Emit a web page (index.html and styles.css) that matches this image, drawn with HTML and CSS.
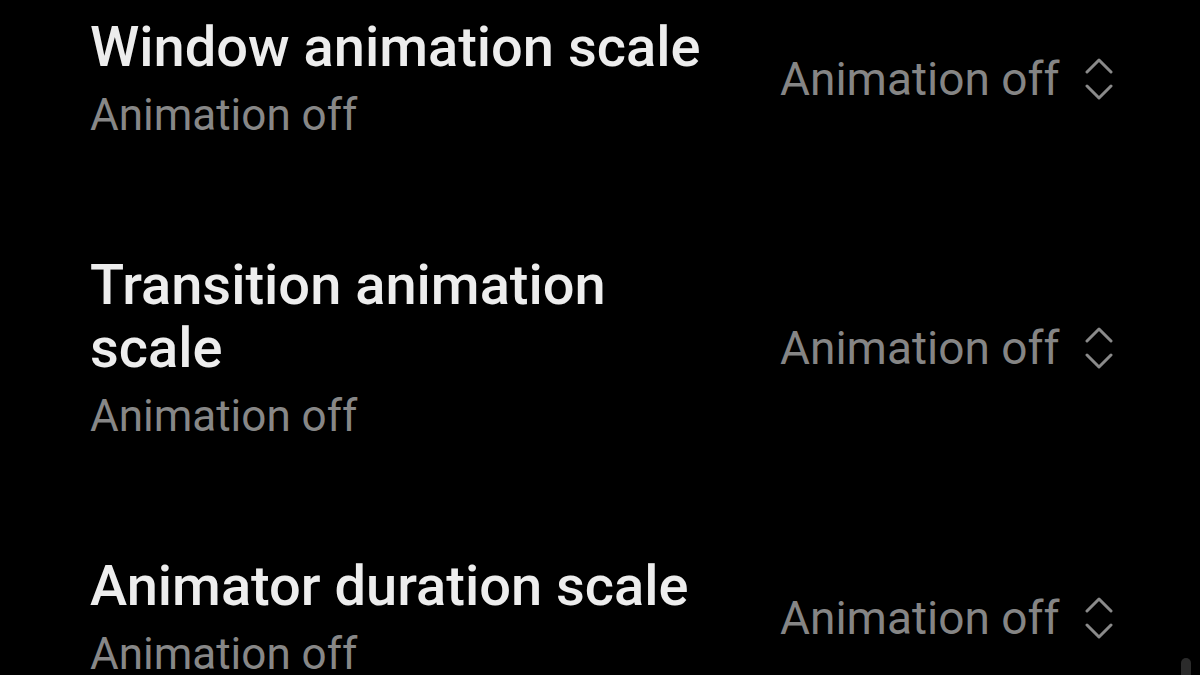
FILE: index.html
```html
<!DOCTYPE html>
<html>
<head>
    <meta charset="utf-8">
    <link rel="stylesheet" href="styles.css">
</head>
<body>
    <div class="settings">
        <div class="row">
            <div class="label">
                <div class="title">Window animation scale</div>
                <div class="summary">Animation off</div>
            </div>
            <div class="value">
                <span>Animation off</span>
                <svg class="spinner" width="28" height="44" viewBox="0 0 28 44">
                    <polyline points="2,15 14,3 26,15"/>
                    <polyline points="2,29 14,41 26,29"/>
                </svg>
            </div>
        </div>
        <div class="row">
            <div class="label">
                <div class="title">Transition animation scale</div>
                <div class="summary">Animation off</div>
            </div>
            <div class="value">
                <span>Animation off</span>
                <svg class="spinner" width="28" height="44" viewBox="0 0 28 44">
                    <polyline points="2,15 14,3 26,15"/>
                    <polyline points="2,29 14,41 26,29"/>
                </svg>
            </div>
        </div>
        <div class="row">
            <div class="label">
                <div class="title">Animator duration scale</div>
                <div class="summary">Animation off</div>
            </div>
            <div class="value">
                <span>Animation off</span>
                <svg class="spinner" width="28" height="44" viewBox="0 0 28 44">
                    <polyline points="2,15 14,3 26,15"/>
                    <polyline points="2,29 14,41 26,29"/>
                </svg>
            </div>
        </div>
    </div>
    <div class="scrollthumb"></div>
</body>
</html>
```

FILE: styles.css
```css
html, body {
    margin: 0;
    height: 100%;
    background-color: #000000;
    overflow: hidden;
    font-family: Roboto, "Noto Sans", sans-serif;
}

.settings {
    display: flex;
    flex-direction: column;
    gap: 113px;
    padding-top: 16px;
    padding-left: 90px;
}

.row {
    display: grid;
    grid-template-columns: 630px auto;
    column-gap: 60px;
    align-items: center;
}

.title {
    font-size: 56px;
    line-height: 63px;
    font-weight: 500;
    color: #ededed;
}

.summary {
    margin-top: 10px;
    font-size: 44px;
    line-height: 52px;
    color: #878787;
}

.value {
    display: flex;
    align-items: center;
    gap: 26px;
    font-size: 46px;
    color: #858585;
}

.spinner {
    fill: none;
    stroke: #8a8a8a;
    stroke-width: 3;
    stroke-linecap: round;
    stroke-linejoin: round;
}

.scrollthumb {
    position: absolute;
    right: 9px;
    top: 658px;
    width: 10px;
    height: 30px;
    border-radius: 5px;
    background-color: #2b2b2b;
}
```
